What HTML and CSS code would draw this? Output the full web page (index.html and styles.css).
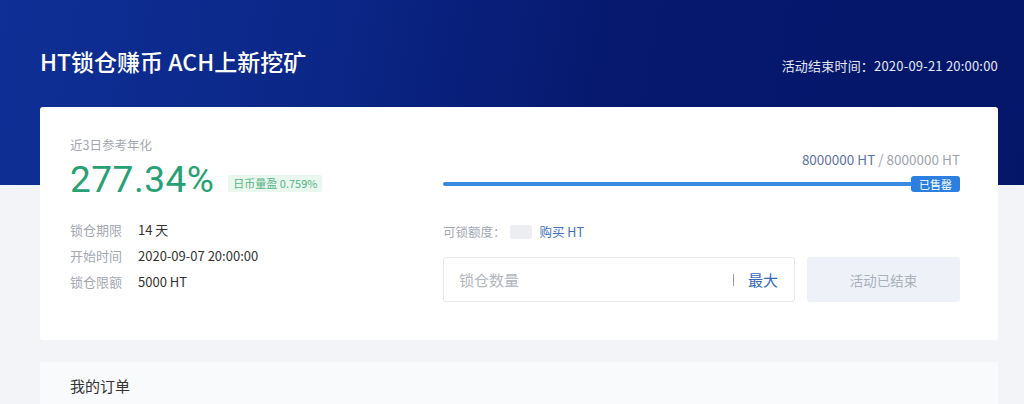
FILE: index.html
```html
<!DOCTYPE html>
<html lang="zh-CN">
<head>
<meta charset="utf-8">
<title>HT锁仓赚币 ACH上新挖矿</title>
<link rel="stylesheet" href="styles.css">
</head>
<body>
<header class="hero">
  <div class="hero-row">
    <h1 class="title">HT锁仓赚币 ACH上新挖矿</h1>
    <div class="end-time">活动结束时间：2020-09-21 20:00:00</div>
  </div>
</header>
<main class="main">
  <section class="card">
    <div class="left">
      <div class="muted small">近3日参考年化</div>
      <div class="rate-row">
        <span class="rate">277.34%</span>
        <span class="rate-badge">日币量盈 0.759%</span>
      </div>
      <div class="info">
        <div class="info-row"><span class="info-label">锁仓期限</span><span class="info-value">14 天</span></div>
        <div class="info-row"><span class="info-label">开始时间</span><span class="info-value">2020-09-07 20:00:00</span></div>
        <div class="info-row"><span class="info-label">锁仓限额</span><span class="info-value">5000 HT</span></div>
      </div>
    </div>
    <div class="right">
      <div class="amount"><span class="amount-now">8000000 HT</span> / 8000000 HT</div>
      <div class="progress">
        <div class="track"><div class="fill" style="width:100%"></div></div>
        <span class="sold">已售罄</span>
      </div>
      <div class="quota"><span class="muted">可锁额度：</span><span class="blur"></span><a class="link">购买 HT</a></div>
      <div class="form">
        <div class="input">
          <span class="placeholder">锁仓数量</span>
          <span class="sep"></span>
          <span class="max">最大</span>
        </div>
        <div class="btn">活动已结束</div>
      </div>
    </div>
  </section>
  <section class="orders">
    <h2 class="orders-title">我的订单</h2>
  </section>
</main>
</body>
</html>
```
FILE: styles.css
```css
* { box-sizing: border-box; }
html, body { margin: 0; padding: 0; }
body {
  background: #f2f4f8;
  font-family: "Noto Sans CJK SC", "Noto Sans", "Liberation Sans", sans-serif;
  color: #333;
  overflow: hidden;
}
.hero {
  height: 185px;
  background: linear-gradient(100deg, #0f2f96 0%, #0b2788 30%, #06196f 58%, #041668 100%);
  padding: 0 26px 0 40px;
}
.hero-row {
  display: flex;
  justify-content: space-between;
  align-items: baseline;
  padding-top: 44px;
}
.title {
  margin: 0;
  font-size: 23px;
  line-height: 34px;
  font-weight: 500;
  color: #fff;
}
.end-time {
  font-size: 13px;
  color: #e6e9f5;
  letter-spacing: 0.2px;
}
.main {
  margin-top: -78px;
  padding: 0 26px 0 40px;
}
.card {
  height: 233px;
  background: #fff;
  border-radius: 3px;
  padding: 30px 38px 0 30px;
  display: flex;
}
.left { width: 373px; }
.muted { color: #a3a7b0; }
.small { font-size: 12.5px; line-height: 16px; }
.rate-row {
  display: flex;
  align-items: center;
  margin-top: 7px;
  height: 40px;
}
.rate {
  font-family: "Roboto", "Liberation Sans", sans-serif;
  font-size: 37px;
  line-height: 40px;
  color: #27a173;
  letter-spacing: 0.5px;
}
.rate-badge {
  margin-left: 14px;
  margin-top: 6px;
  background: #e9f7ef;
  color: #55b586;
  font-size: 11px;
  line-height: 17px;
  padding: 0 5px;
  border-radius: 2px;
}
.info { margin-top: 17px; }
.info-row {
  display: flex;
  font-size: 13px;
  line-height: 26px;
}
.info-label { width: 68px; color: #a3a7b0; }
.info-value { color: #333; }
.right { flex: 1; padding-top: 14px; }
.amount {
  text-align: right;
  font-size: 13.5px;
  line-height: 16px;
  color: #9ea3ad;
}
.amount-now { color: #5d72a6; }
.progress {
  display: flex;
  align-items: center;
  margin-top: 9px;
  height: 16px;
}
.track {
  flex: 1;
  height: 4px;
  background: #e6eaf0;
  border-radius: 2px;
  margin-right: -4px;
}
.fill { height: 100%; background: #3a8ae2; border-radius: 2px; }
.sold {
  background: #2a7fe0;
  color: #fff;
  font-size: 11px;
  line-height: 16px;
  padding: 0 8px;
  border-radius: 3px;
}
.quota {
  display: flex;
  align-items: center;
  margin-top: 32px;
  font-size: 12.5px;
  line-height: 16px;
}
.blur {
  width: 22px;
  height: 14px;
  background: #eceef1;
  border-radius: 3px;
  margin: 0 8px 0 4px;
}
.link { color: #3d6fc0; }
.form {
  display: flex;
  margin-top: 17px;
  gap: 12px;
}
.input {
  width: 352px;
  height: 45px;
  border: 1px solid #e6e8ec;
  border-radius: 3px;
  display: flex;
  align-items: center;
  padding: 0 16px 0 15px;
}
.placeholder { flex: 1; color: #b2b6be; font-size: 15px; }
.sep { width: 1px; height: 12px; background: #999; margin-right: 14px; }
.max { color: #3469b8; font-size: 15px; }
.btn {
  flex: 1;
  height: 45px;
  background: #eef2f8;
  border-radius: 3px;
  display: flex;
  align-items: center;
  justify-content: center;
  font-size: 13.5px;
  color: #a9b0bd;
}
.orders {
  margin-top: 22px;
  background: #f9fafc;
  height: 60px;
  padding: 14px 30px;
}
.orders-title {
  margin: 0;
  font-size: 15px;
  line-height: 20px;
  font-weight: 400;
  color: #333;
}
```
